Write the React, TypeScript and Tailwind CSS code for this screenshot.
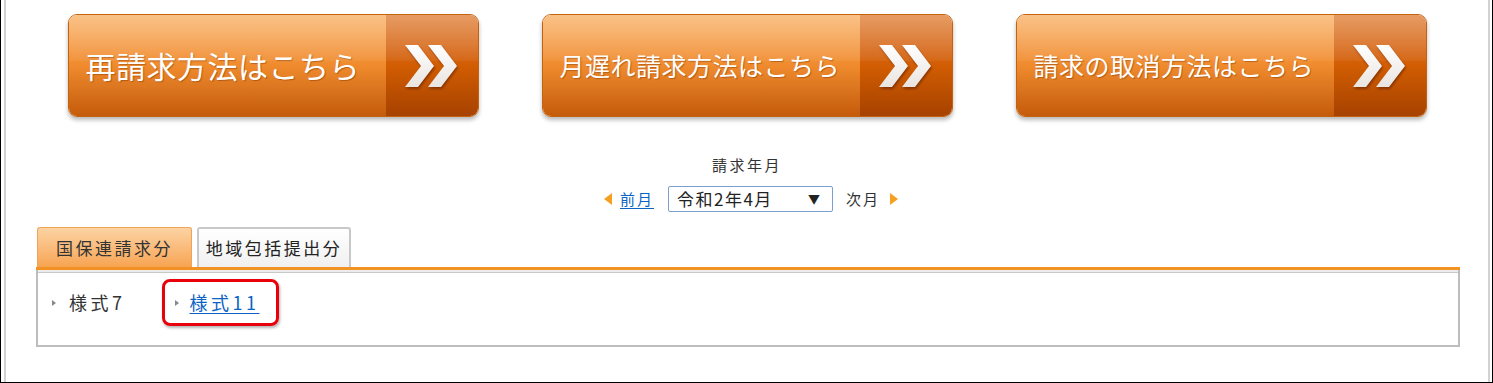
const JP = "font-['Meiryo','Noto_Sans_CJK_JP','Noto_Sans',sans-serif]";

function Chevrons() {
  return (
    <svg width="58" height="46" viewBox="0 0 58 46" className="drop-shadow-[1px_2px_1px_rgba(90,30,0,0.55)]">
      <defs>
        <linearGradient id="chev" x1="0" y1="0" x2="0" y2="1">
          <stop offset="0" stopColor="#ffffff" />
          <stop offset="1" stopColor="#e9e4e0" />
        </linearGradient>
      </defs>
      <polygon points="2,2 15,2 31,23 15,44 2,44 18,23" fill="url(#chev)" />
      <polygon points="25,2 38,2 54,23 38,44 25,44 41,23" fill="url(#chev)" />
    </svg>
  );
}

function OrangeButton({ label, size }: { label: string; size: string }) {
  return (
    <div className="relative flex h-[103px] w-[411px] overflow-hidden rounded-[9px] border border-[#c4620f] shadow-[0_3px_4px_rgba(0,0,0,0.28)]">
      <div className="flex flex-1 items-center bg-gradient-to-b from-[#f9ad5e] via-[#ef8b2d] to-[#c45b0a] pl-[17px]">
        <span className={`${JP} ${size} tracking-[0.5px] text-white [text-shadow:1px_1px_1px_rgba(120,50,0,0.45)]`}>
          {label}
        </span>
      </div>
      <div className="flex w-[92px] items-center justify-center bg-gradient-to-b from-[#de7a2e] via-[#d25d02] to-[#a64200]">
        <Chevrons />
      </div>
      <div className="pointer-events-none absolute inset-x-0 top-0 h-[46%] bg-gradient-to-b from-white/25 to-white/5" />
    </div>
  );
}

export default function App() {
  return (
    <div className={`${JP} h-[383px] w-[1493px] border-x border-b border-black bg-white text-[#333]`}>
      <div className="ml-[3px] mr-[2px] h-full border-x-2 border-[#d2d2d2]">
        <div className="flex justify-center gap-[63px] pt-[14px]">
          <OrangeButton label="再請求方法はこちら" size="text-[30px]" />
          <OrangeButton label="月遅れ請求方法はこちら" size="text-[25px]" />
          <OrangeButton label="請求の取消方法はこちら" size="text-[25px]" />
        </div>

        <div className="mt-[37px] text-center text-[15px] leading-[22px] tracking-[2.5px]">請求年月</div>

        <div className="mt-[10px] flex items-center justify-center pl-[8px] text-[15px] tracking-[2px]">
          <span className="mr-[8px] h-0 w-0 border-y-[6px] border-r-[8px] border-y-transparent border-r-[#f5a020]" />
          <a href="#" className="text-[#0b63c4] underline underline-offset-[3px]">前月</a>
          <div className="ml-[14px] mr-[13px] flex h-[26px] w-[165px] items-center justify-between rounded-[2px] border border-[#7b9fd0] pl-[8px] pr-[10px]">
            <span className="text-[17px] tracking-[1.5px] text-[#222]">令和2年4月</span>
            <span className="text-[12px] text-[#222]">▼</span>
          </div>
          <span>次月</span>
          <span className="ml-[10px] h-0 w-0 border-y-[6px] border-l-[8px] border-y-transparent border-l-[#f5a020]" />
        </div>

        <div className="ml-[30px] mr-[28px] mt-[15px]">
          <div className="flex gap-[5px] border-b-[3px] border-[#f39224]">
            <div className="ml-[1px] flex h-[40px] w-[155px] items-center justify-center rounded-t-[3px] border border-b-0 border-[#f0a458] bg-gradient-to-b from-[#fcd3a3] to-[#f7a450] text-[17px] tracking-[2.5px]">
              国保連請求分
            </div>
            <div className="flex h-[40px] w-[154px] items-center justify-center rounded-t-[3px] border-2 border-b-0 border-[#c8c8c8] bg-gradient-to-b from-white to-[#f0f0f0] text-[17px] tracking-[2.5px] text-[#222]">
              地域包括提出分
            </div>
          </div>
          <div className="h-[77px] border-2 border-t-0 border-[#bdbdbd]">
            <div className="h-[3px] border-b border-[#c8c8c8] bg-[#ececec]" />
            <div className="flex items-center pt-[6px] text-[18px] tracking-[3.5px]">
              <span className="ml-[14px] mr-[13px] h-0 w-0 border-y-[3px] border-l-[4px] border-y-transparent border-l-[#888]" />
              <span>様式7</span>
              <div className="relative ml-[36px] flex h-[47px] w-[117px] items-center rounded-[8px] border-[3px] border-[#e8000b] shadow-[1px_2px_3px_rgba(0,0,0,0.3)]">
                <span className="ml-[10px] mr-[11px] h-0 w-0 border-y-[3px] border-l-[4px] border-y-transparent border-l-[#888]" />
                <a href="#" className="text-[#0b63c4] underline underline-offset-[3px]">様式11</a>
              </div>
            </div>
          </div>
        </div>
      </div>
    </div>
  );
}
